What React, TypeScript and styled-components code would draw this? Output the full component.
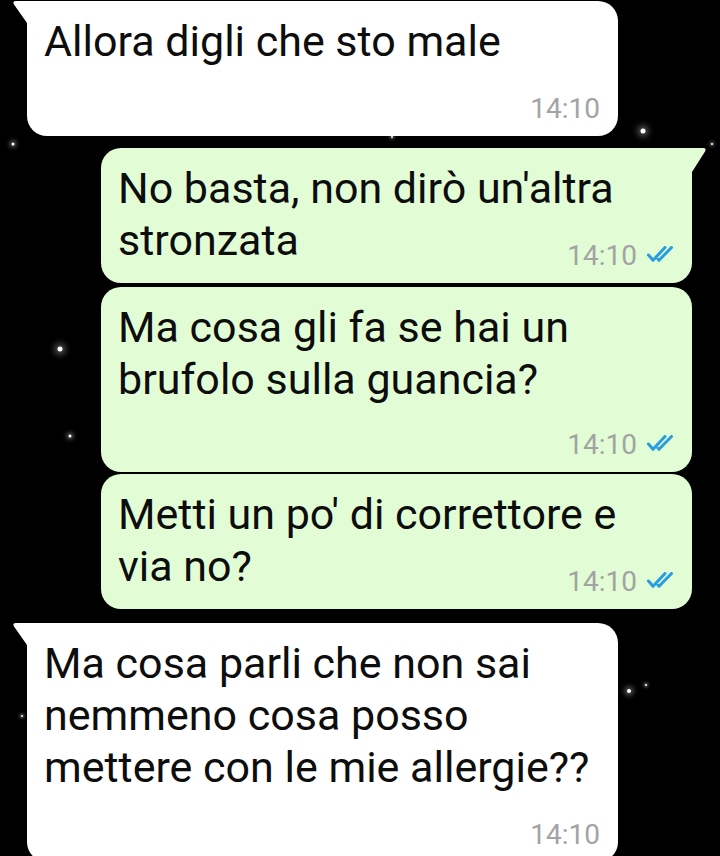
import React from "react";
import styled, { createGlobalStyle } from "styled-components";

const Global = createGlobalStyle`
  html, body { margin: 0; padding: 0; background: #000; }
  body { font-family: Roboto, "Noto Sans", "Liberation Sans", sans-serif; }
`;

const Screen = styled.div`
  position: relative;
  width: 720px;
  height: 856px;
  overflow: hidden;
  background: #000;
  display: flex;
  flex-direction: column;
  padding-top: 1px;
  box-sizing: border-box;
`;

const Star = styled.span<{ $size: number; $glow: number }>`
  position: absolute;
  width: ${(p) => p.$size}px;
  height: ${(p) => p.$size}px;
  border-radius: 50%;
  background: #fff;
  box-shadow: 0 0 ${(p) => p.$glow}px ${(p) => p.$glow / 2}px rgba(255, 255, 255, 0.35);
  transform: translate(-50%, -50%);
`;

const Bubble = styled.div<{ $out?: boolean; $tail?: boolean; $gap: number }>`
  position: relative;
  z-index: 1;
  box-sizing: border-box;
  width: 591px;
  margin-top: ${(p) => p.$gap}px;
  align-self: ${(p) => (p.$out ? "flex-end" : "flex-start")};
  margin-left: ${(p) => (p.$out ? 0 : 27)}px;
  margin-right: ${(p) => (p.$out ? 28 : 0)}px;
  background: ${(p) => (p.$out ? "#e2fdd6" : "#ffffff")};
  border-radius: 20px;
  ${(p) => (p.$tail && p.$out ? "border-top-right-radius: 0;" : "")}
  ${(p) => (p.$tail && !p.$out ? "border-top-left-radius: 0;" : "")}
  padding: 14px 15px 11px 17px;
`;

const Tail = styled.svg<{ $out?: boolean }>`
  position: absolute;
  top: 0;
  width: 16px;
  height: 24px;
  ${(p) => (p.$out ? "right: -15px;" : "left: -15px;")}
`;

const Line = styled.div`
  font-size: 43px;
  line-height: 52px;
  height: 52px;
  color: #0d0d0d;
  white-space: nowrap;
`;

const LastRow = styled.div`
  display: flex;
  justify-content: space-between;
  align-items: flex-start;
`;

const Meta = styled.div<{ $shift: number; $out?: boolean }>`
  display: flex;
  justify-content: flex-end;
  align-items: center;
  gap: 10px;
  margin-top: ${(p) => p.$shift}px;
  padding-right: ${(p) => (p.$out ? 0 : 3)}px;
  font-size: 28px;
  line-height: 33px;
  color: #a3a3a3;
`;

const Ticks = styled.svg`
  width: 30px;
  height: 16px;
  margin-top: -3px;
`;

const DoubleTick = () => (
  <Ticks viewBox="0 0 30 16">
    <path
      d="M1.5 9 L6 14.3 L18 1.5 M11 13.3 L12 14.3 L24.5 1.5"
      fill="none"
      stroke="#289ddf"
      strokeWidth="3"
      strokeLinecap="round"
      strokeLinejoin="round"
    />
  </Ticks>
);

type Msg = {
  lines: string[];
  out?: boolean;
  tail?: boolean;
  inline?: boolean;
  gap: number;
  metaGap?: number;
};

const messages: Msg[] = [
  { lines: ["Allora digli che sto male"], tail: true, gap: 0, metaGap: 25 },
  { lines: ["No basta, non dirò un'altra", "stronzata"], out: true, tail: true, inline: true, gap: 12 },
  { lines: ["Ma cosa gli fa se hai un", "brufolo sulla guancia?"], out: true, gap: 4, metaGap: 23 },
  { lines: ["Metti un po' di correttore e", "via no?"], out: true, inline: true, gap: 2 },
  {
    lines: ["Ma cosa parli che non sai", "nemmeno cosa posso", "mettere con le mie allergie??"],
    tail: true,
    gap: 14,
    metaGap: 25,
  },
];

const stars = [
  { x: 643, y: 131, s: 5, g: 6 },
  { x: 13, y: 144, s: 3, g: 4 },
  { x: 392, y: 137, s: 2, g: 3 },
  { x: 60, y: 349, s: 5, g: 6 },
  { x: 70, y: 436, s: 3, g: 4 },
  { x: 629, y: 691, s: 4, g: 5 },
  { x: 646, y: 685, s: 2, g: 3 },
  { x: 22, y: 716, s: 2, g: 3 },
  { x: 712, y: 144, s: 2, g: 3 },
];

function MetaInfo({ out, shift }: { out?: boolean; shift: number }) {
  return (
    <Meta $shift={shift} $out={out}>
      <span>14:10</span>
      {out && <DoubleTick />}
    </Meta>
  );
}

export default function App() {
  return (
    <>
      <Global />
      <Screen>
        {stars.map((s, i) => (
          <Star key={i} $size={s.s} $glow={s.g} style={{ left: s.x, top: s.y }} />
        ))}
        {messages.map((m, i) => {
          const body = m.inline ? m.lines.slice(0, -1) : m.lines;
          return (
            <Bubble key={i} $out={m.out} $tail={m.tail} $gap={m.gap}>
              {m.tail && (
                <Tail $out={m.out} viewBox="0 0 16 24">
                  {m.out ? (
                    <path d="M0 0 L12 0 Q16 0 14 3.5 L1 24 L0 24 Z" fill="#e2fdd6" />
                  ) : (
                    <path d="M16 0 L4 0 Q0 0 2 3.5 L15 22 L16 22 Z" fill="#ffffff" />
                  )}
                </Tail>
              )}
              {body.map((l, j) => (
                <Line key={j}>{l}</Line>
              ))}
              {m.inline ? (
                <LastRow>
                  <Line>{m.lines[m.lines.length - 1]}</Line>
                  <MetaInfo out={m.out} shift={25} />
                </LastRow>
              ) : (
                <MetaInfo out={m.out} shift={m.metaGap ?? 25} />
              )}
            </Bubble>
          );
        })}
      </Screen>
    </>
  );
}
